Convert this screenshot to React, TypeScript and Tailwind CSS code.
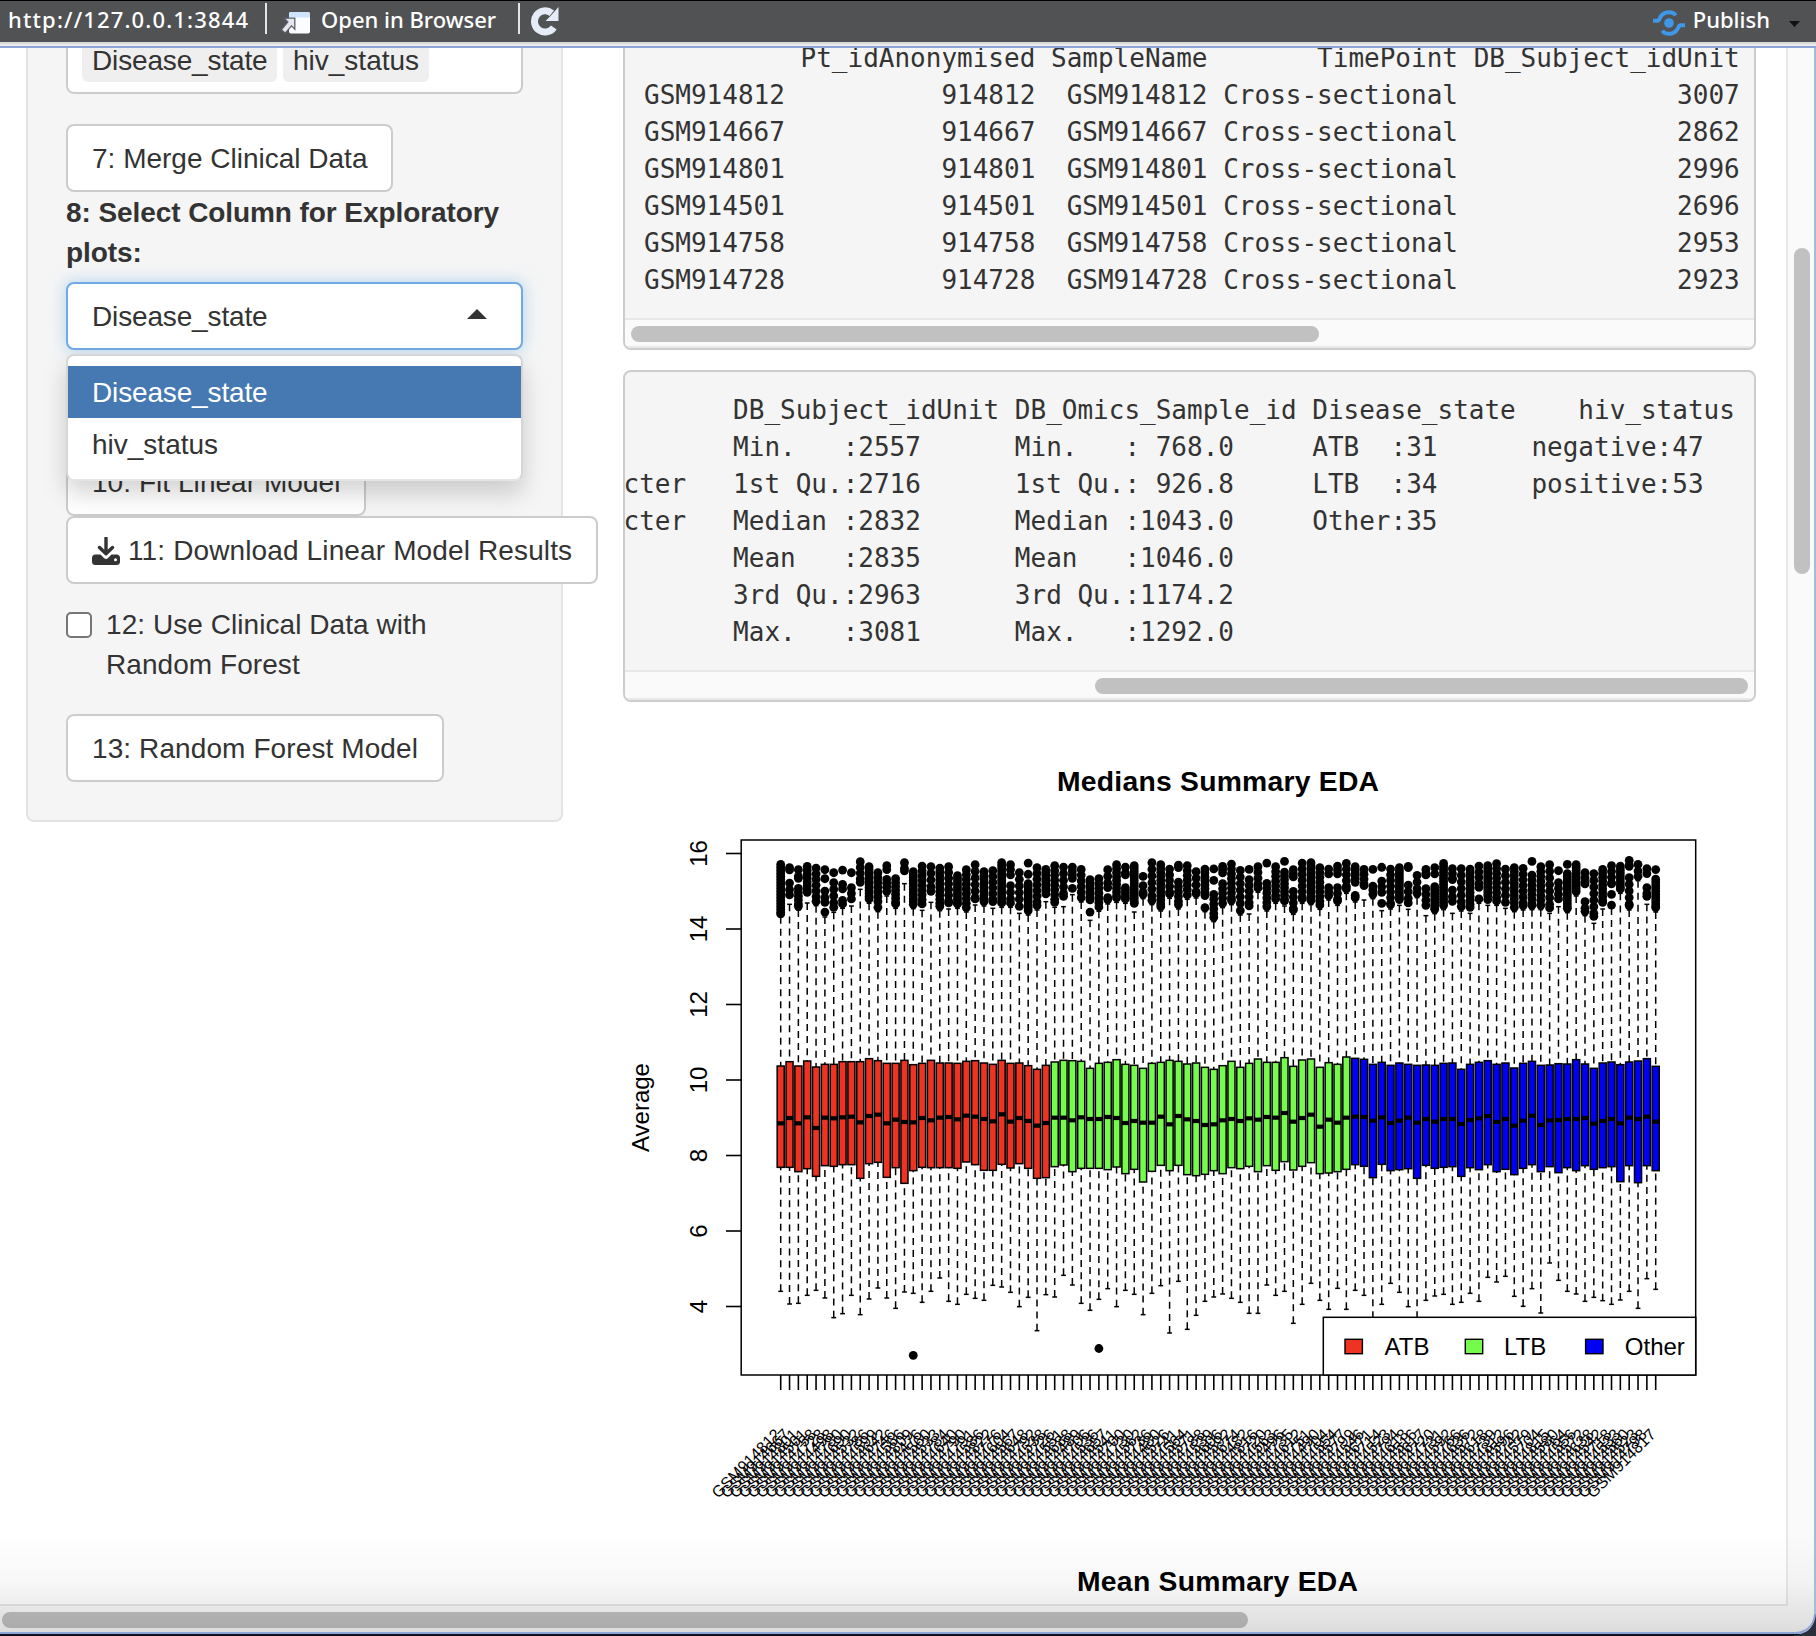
import React from "react";

const SANS = "font-['Liberation_Sans',Arial,sans-serif]";
const MONO = "font-['DejaVu_Sans_Mono',monospace]";
const BAR = "font-['Noto_Sans',sans-serif]";

/* ---------- chart data, in thirds of a pixel below y = 740 ---------- */

const TOPS = [
  978, 965, 978, 963, 981, 973, 973, 965, 965, 965, 956, 962, 970, 970, 961, 974, 970, 961, 969, 969, 970, 964, 962, 969, 973,
  961, 970, 969, 977, 988, 976, 966, 961, 962, 964, 985, 970, 967, 959, 973, 976, 985, 970, 967, 961, 964, 972, 969, 982, 988,
  977, 964, 982, 970, 957, 967, 967, 953, 979, 960, 957, 982, 968, 973, 951, 955, 958, 973, 967, 976, 969, 973, 976, 975, 976,
  970, 969, 988, 973, 967, 962, 973, 969, 984, 970, 964, 976, 975, 971, 972, 959, 972, 985, 969, 966, 974, 966, 963, 956, 979,
];

const MEDIANS = [
  1150, 1134, 1150, 1132, 1164, 1133, 1135, 1132, 1130, 1147, 1128, 1124, 1150, 1139, 1146, 1147, 1134, 1141, 1133, 1131, 1138,
  1127, 1130, 1137, 1144, 1123, 1145, 1134, 1143, 1157, 1149, 1133, 1133, 1141, 1132, 1137, 1137, 1131, 1134, 1149, 1143, 1148,
  1148, 1130, 1153, 1128, 1138, 1143, 1155, 1153, 1141, 1137, 1143, 1135, 1139, 1131, 1133, 1119, 1145, 1134, 1124, 1160, 1139,
  1148, 1133, 1130, 1131, 1142, 1132, 1149, 1142, 1133, 1148, 1137, 1145, 1137, 1137, 1152, 1140, 1135, 1128, 1146, 1137, 1157,
  1142, 1127, 1155, 1141, 1140, 1137, 1137, 1134, 1151, 1143, 1137, 1150, 1133, 1137, 1130, 1145,
];

const BOTTOMS = [
  1282, 1282, 1295, 1286, 1309, 1277, 1279, 1274, 1274, 1315, 1271, 1267, 1312, 1283, 1330, 1292, 1282, 1283, 1283, 1283, 1285,
  1266, 1274, 1291, 1291, 1273, 1284, 1271, 1285, 1315, 1313, 1280, 1275, 1295, 1285, 1285, 1285, 1289, 1281, 1301, 1288, 1326,
  1294, 1276, 1292, 1276, 1304, 1307, 1303, 1292, 1301, 1283, 1286, 1279, 1295, 1277, 1291, 1265, 1290, 1279, 1268, 1301, 1299,
  1295, 1288, 1274, 1279, 1313, 1273, 1292, 1289, 1286, 1315, 1276, 1285, 1282, 1280, 1309, 1283, 1289, 1274, 1295, 1288, 1304,
  1285, 1274, 1295, 1280, 1298, 1283, 1292, 1277, 1288, 1283, 1280, 1325, 1277, 1328, 1277, 1292,
];

/* Lower whisker ends, in thirds of a pixel below y = 1170. */
const LOWER = [
  364, 402, 400, 376, 361, 384, 443, 431, 376, 434, 387, 354, 384, 415, 366, 370, 397, 364, 324, 394, 403, 373, 385, 391, 346,
  351, 367, 410, 382, 482, 374, 381, 316, 345, 400, 421, 388, 356, 410, 361, 373, 434, 370, 347, 489, 334, 478, 436, 394, 381,
  372, 385, 397, 430, 430, 345, 376, 364, 460, 403, 340, 391, 418, 355, 418, 361, 376, 445, 403, 340, 367, 410, 445, 391, 378,
  373, 403, 397, 370, 394, 322, 336, 319, 379, 409, 356, 429, 279, 331, 364, 372, 394, 382, 392, 403, 390, 364, 415, 326, 358,
];

/* Runs of outliers per sample: "top-bottom,top-bottom|whisker end". */
const OUTLIERS = `360-535|530 370-403,416-478|493 376-428,432-512|510 366-470|489 371-497|497 376-402,403-425,440-500,503-528|531
385-410,415-515|517 377-402,420-460,468-505|505 385-408,430-490|498 352-440|448 367-490|490 385-515|515 364-402,405-467|468
403-505|505 355-406|431 382-506|506 365-505|511 367-467|487 371-512|512 367-502|507 394-505|505 376-516|516 361-490|495
382-498|498 379-498|505 355-502|502 361-418,424-502|502 385-512|520 356-381,388-416,418-525|525 370-510|510 375-475|485
364-500|502 368-482|500 368-428,432-458|464 375-486|486 406-493,503-528|541 403-514|514 376-456,460-492|492 361-487|487
368-418,430-490|490 364-503|516 396-422,424-476|476 355-494|494 361-513|513 374-475|475 362-396,413-507|507 364-478|478
382-474|474 374-480,490-515|515 373-400,408-434,450-545|545 366-412,418-503|503 359-494|494 378-525|525 375-397,406-511|522
367-457|457 356-381,417-513|513 367-490|490 351-376,383-496|498 376-424,441-523|523 356-490|490 355-494|494 370-508|508
374-415,430-480|480 365-415,430-496|496 357-460|460 367-440,453-486|486 375-450|480 375-397,425-476|476
368-395,410-470,477-503|512 374-507|507 370-492|496 366-396,422-502|508 393-473|473 375-418,433-509|527 370-415,427-521|521
357-509|509 373-432,437-497|520 373-513|513 374-515|520 365-455,462-490|490 364-492|496 358-496|496 374-500|505 370-515|515
372-510|510 351-375,392-509|509 367-509|509 361-517|520 379-403,415-490|500 360-384,388-518|518 361-468|468
385-445,472-527|527 388-542|550 375-500|507 364-445,450-473,482-504|504 365-460|460 348-392,400-510|510 360-422|422
373-414,430-482|493 374-402,404-516|516`
  .split(/\s+/)
  .map((entry) => {
    const [runs, whisker] = entry.split("|");
    return { runs: runs.split(",").map((r) => r.split("-").map(Number)), whisker: Number(whisker) };
  });

const SUFFIXES = [
  812, 667, 801, 501, 758, 728, 498, 780, 690, 532, 786, 599, 642, 746, 566, 809, 476, 560, 533, 784, 640, 790, 791, 586, 822,
  776, 604, 567, 648, 792, 538, 726, 551, 688, 489, 706, 536, 657, 541, 700, 730, 562, 736, 480, 526, 741, 564, 571, 788, 539,
  606, 592, 674, 482, 816, 720, 563, 496, 735, 612, 751, 490, 704, 554, 577, 799, 546, 671, 714, 523, 794, 618, 516, 617, 720,
  731, 592, 766, 636, 572, 618, 739, 812, 596, 742, 579, 704, 815, 580, 764, 556, 572, 638, 542, 718, 533, 560, 523, 798, 817,
];

const colX = (i: number) => 780.7 + i * 8.8384;
const third = (v: number) => 740 + v / 3;
const fillOf = (i: number) => (i < 31 ? "#ee3323" : i < 65 ? "#75fb4c" : "#0000f5");

function dotsIn(top: number, bottom: number, seed: number) {
  const from = third(top) + 4.4;
  const to = third(bottom) - 4.4;
  const ys: number[] = [];
  let y = from;
  let n = 0;
  while (y < to - 1) {
    ys.push(y);
    y += 3 + ((seed * 7 + n * 5) % 5) * 0.9;
    n += 1;
  }
  ys.push(Math.max(from, to));
  return ys;
}

function BoxPlot() {
  return (
    <svg className="block shrink-0" width="1132" height="902" viewBox="624 702 1132 902" fontFamily="'Liberation Sans', Arial, sans-serif">
      <text x="1057" y="790.8" fontSize="28.3" fontWeight="700" textLength="322" lengthAdjust="spacing">
        Medians Summary EDA
      </text>
      <g stroke="#000" strokeWidth="1.6">
        {[16, 14, 12, 10, 8, 6, 4].map((v, i) => (
          <line key={v} x1="726" x2="741" y1={853.5 + i * 75.5} y2={853.5 + i * 75.5} />
        ))}
        {TOPS.map((_, i) => (
          <line key={i} x1={colX(i)} x2={colX(i)} y1="1375" y2="1390" />
        ))}
      </g>
      {[16, 14, 12, 10, 8, 6, 4].map((v, i) => (
        <text key={v} fontSize="24" textAnchor="middle" transform={`translate(706.5 ${853.5 + i * 75.5}) rotate(-90)`}>
          {v}
        </text>
      ))}
      <text fontSize="24" textAnchor="middle" transform="translate(648.5 1107.5) rotate(-90)">
        Average
      </text>
      {TOPS.map((top, i) => {
        const x = colX(i);
        const { runs, whisker } = OUTLIERS[i];
        const upper = third(whisker);
        const lower = 1170 + LOWER[i] / 3;
        return (
          <g key={i}>
            <g stroke="#000" strokeWidth="1.5">
              <line x1={x} x2={x} y1={upper} y2={third(top)} strokeDasharray="7 5.1" />
              <line x1={x} x2={x} y1={lower} y2={third(BOTTOMS[i])} strokeDasharray="7 5.1" />
              <line x1={x - 2.4} x2={x + 2.4} y1={upper} y2={upper} />
              <line x1={x - 2.4} x2={x + 2.4} y1={lower} y2={lower} />
            </g>
            <rect
              x={x - 3.53}
              y={third(top)}
              width="7.07"
              height={(BOTTOMS[i] - top) / 3}
              fill={fillOf(i)}
              stroke="#000"
              strokeWidth="1.5"
            />
            <line x1={x - 3.53} x2={x + 3.53} y1={third(MEDIANS[i])} y2={third(MEDIANS[i])} stroke="#000" strokeWidth="4.2" />
            {runs.flatMap(([a, b], k) => dotsIn(a, b, i + k).map((y) => <circle key={`${k}-${y}`} cx={x} cy={y} r="4.4" />))}
          </g>
        );
      })}
      <circle cx={colX(15)} cy="1355.3" r="4.4" />
      <circle cx={colX(36)} cy="1348.5" r="4.4" />
      <rect x="741.2" y="840" width="954.5" height="535" fill="none" stroke="#000" strokeWidth="1.5" />
      <rect x="1323.3" y="1317.3" width="372.4" height="57.7" fill="#fff" stroke="#000" strokeWidth="1.5" />
      {[
        ["ATB", 1345, 1384.5, "#ee3323"],
        ["LTB", 1465.3, 1504, "#75fb4c"],
        ["Other", 1585.6, 1624.8, "#0000f5"],
      ].map(([name, sx, tx, color]) => (
        <g key={name}>
          <rect x={sx} y="1339.3" width="17.4" height="14.4" fill={color as string} stroke="#000" strokeWidth="1.4" />
          <text x={tx} y="1354.9" fontSize="24">
            {name}
          </text>
        </g>
      ))}
      {SUFFIXES.map((s, i) => (
        <text key={i} fontSize="16" textAnchor="end" transform={`translate(${colX(i) + 1} 1435.500) rotate(-45)`}>
          {`GSM914${s}`}
        </text>
      ))}
      <text x="1077" y="1590.8" fontSize="28.3" fontWeight="700" textLength="281" lengthAdjust="spacing">
        Mean Summary EDA
      </text>
    </svg>
  );
}

/* ---------- toolbar ---------- */

function OpenIcon() {
  return (
    <svg width="30" height="22" viewBox="0 0 30 22">
      <rect x="8" y="0" width="21" height="21.500" rx="2" fill="#fafcff" />
      <path d="M10 0h17a2 2 0 0 1 2 2v3.500H8V2a2 2 0 0 1 2-2z" fill="#cfe4fb" />
      <path d="M3.300 6.200h10.500v11l-3.300-3.300-6.300 7.300L.5 17.700l6.300-7.700z" fill="#e6e6ee" stroke="#5b5f6a" strokeWidth="1.300" />
    </svg>
  );
}

function ReloadIcon() {
  return (
    <svg width="30" height="30" viewBox="0 0 30 30">
      <path d="M23.800 21.500A10.600 10.600 0 1 1 21.800 7.200" fill="none" stroke="#e6ecf7" strokeWidth="7" />
      <path d="M28.500 1v14H15.500l5-5z" fill="#e6ecf7" />
    </svg>
  );
}

function PublishIcon() {
  return (
    <svg width="32" height="26" viewBox="0 0 32 26">
      <circle cx="16" cy="13" r="4.800" fill="#3f97e8" />
      <path d="M0 10.800h4.500C6 10.800 6.200 9.500 7 7.800 9.500 2.500 15.500.800 20.500 3.300c1.200.6 1.600 1.500 2 2.200" fill="none" stroke="#3f97e8" strokeWidth="4" />
      <path d="M32 15.200h-4.500c-1.500 0-1.700 1.300-2.500 3-2.500 5.300-8.500 7-13.500 4.500-1.200-.6-1.600-1.500-2-2.200" fill="none" stroke="#3f97e8" strokeWidth="4" />
    </svg>
  );
}

function Toolbar() {
  return (
    <header className={`flex h-[42px] shrink-0 items-center border-t border-black bg-[#515254] pb-[4px] text-[22px] font-medium text-white ${BAR}`}>
      <span className="ml-[8px] w-[242px] whitespace-nowrap tracking-[1.15px]">http://127.0.0.1:3844</span>
      <span className="-mt-[2px] ml-[15px] h-[31px] w-[2px] bg-[#e4e4e4]" />
      <span className="ml-[14px] mt-[7px]">
        <OpenIcon />
      </span>
      <span className="ml-[10px] w-[189px] whitespace-nowrap">Open in Browser</span>
      <span className="-mt-[2px] ml-[8px] h-[31px] w-[2px] bg-[#e4e4e4]" />
      <span className="ml-[10px] mt-[2px]">
        <ReloadIcon />
      </span>
      <span className="ml-auto mt-[6px]">
        <PublishIcon />
      </span>
      <span className="ml-[8px] whitespace-nowrap">Publish</span>
      <svg className="ml-[19px] mr-[16px] mt-[9px]" width="11" height="6" viewBox="0 0 11 6">
        <path d="M0 0h11L5.500 6z" fill="#111" />
      </svg>
    </header>
  );
}

/* ---------- sidebar ---------- */

function Button({ children, className = "" }: { children: React.ReactNode; className?: string }) {
  return (
    <button
      className={`flex h-[68px] w-max items-center whitespace-nowrap rounded-[8px] border-2 border-[#ccc] bg-white px-[24px] pt-[2px] leading-[40px] ${className}`}
    >
      {children}
    </button>
  );
}

function Sidebar() {
  return (
    <aside
      className={`ml-[26px] h-[774px] w-[537px] shrink-0 rounded-b-[8px] border-2 border-t-0 border-[#e3e3e3] bg-[#f5f5f5] px-[38px] text-[28px] leading-[40px] text-[#333] ${SANS}`}
    >
      <div className="flex h-[46px] w-[457px] items-end gap-[6px] overflow-hidden rounded-b-[8px] border-2 border-t-0 border-[#ccc] bg-white px-[14px] pb-[10px]">
        <span className="w-[195px] rounded-[6px] bg-[#efefef] px-[10px] pb-px tracking-[-0.15px]">Disease_state</span>
        <span className="w-[146px] rounded-[6px] bg-[#efefef] px-[10px] pb-px">hiv_status</span>
      </div>
      <Button className="mt-[30px]">7: Merge Clinical Data</Button>
      <label className="-mb-px block pt-px font-bold tracking-[-0.08px]">8: Select Column for Exploratory plots:</label>
      <div className="relative mt-[10px]">
        <div className="flex h-[68px] w-[457px] items-center justify-between rounded-[8px] border-2 border-[#70aae6] bg-white pl-[24px] pr-[34px] shadow-[0_0_16px_rgba(102,175,233,0.5)]">
          <span className="pt-[2px] tracking-[-0.15px]">Disease_state</span>
          <svg className="-mt-[4px]" width="20" height="10" viewBox="0 0 20 10">
            <path d="M10 0l10 10H0z" fill="#333" />
          </svg>
        </div>
        <ul className="absolute left-0 top-[72px] z-10 h-[127px] w-[457px] rounded-[8px] border-2 border-[#d6d6d6] border-b-[#e4e4e4] bg-white pt-[10px] shadow-[0_12px_24px_rgba(0,0,0,0.175)]">
          <li className="h-[52px] bg-[#4679b2] px-[24px] pt-[7px] tracking-[-0.15px] text-white">Disease_state</li>
          <li className="h-[52px] px-[24px] pt-[7px]">hiv_status</li>
        </ul>
      </div>
      <Button className="mt-[98px] tracking-[0.05px]">10: Fit Linear Model</Button>
      <Button className="gap-[8px] tracking-[0.13px]">
        <svg width="28" height="28" viewBox="0 0 28 28">
          <path d="M14 1v14M7.500 10.500L14 16.800l6.500-6.300" fill="none" stroke="#333" strokeWidth="3.400" strokeLinecap="round" strokeLinejoin="round" />
          <path
            d="M3.500 17.500h5L12 21a2.900 2.900 0 0 0 4 0l3.500-3.500h5A3.500 3.500 0 0 1 28 21v3.500a3.500 3.500 0 0 1-3.500 3.500h-21A3.500 3.500 0 0 1 0 24.500V21a3.500 3.500 0 0 1 3.500-3.500z"
            fill="#333"
          />
          <circle cx="23.500" cy="22.800" r="1.500" fill="#fff" />
        </svg>
        <span>11: Download Linear Model Results</span>
      </Button>
      <label className="mt-[21px] flex gap-[14px]">
        <span className="mt-[7px] h-[26px] w-[26px] shrink-0 rounded-[5px] border-2 border-[#767676] bg-white" />
        <span className="w-[340px] tracking-[0.06px]">12: Use Clinical Data with Random Forest</span>
      </label>
      <Button className="mt-[29px] tracking-[0.1px]">13: Random Forest Model</Button>
    </aside>
  );
}

/* ---------- printed tables ---------- */

const HEAD_ROWS = ["812|3007", "667|2862", "801|2996", "501|2696", "758|2953", "728|2923"].map((r) => {
  const [id, unit] = r.split("|");
  return `GSM914${id}          914${id}  GSM914${id} Cross-sectional${unit.padStart(18)}`;
});
const HEAD = ["          Pt_idAnonymised SampleName       TimePoint DB_Subject_idUnit", ...HEAD_ROWS].join("\n");

const SUMMARY = [
  "       DB_Subject_idUnit DB_Omics_Sample_id Disease_state    hiv_status",
  "       Min.   :2557      Min.   : 768.0     ATB  :31      negative:47",
  "cter   1st Qu.:2716      1st Qu.: 926.8     LTB  :34      positive:53",
  "cter   Median :2832      Median :1043.0     Other:35",
  "       Mean   :2835      Mean   :1046.0",
  "       3rd Qu.:2963      3rd Qu.:1174.2",
  "       Max.   :3081      Max.   :1292.0",
].join("\n");

function ScrollPane({ text, className, textClass, thumb }: { text: string; className: string; textClass: string; thumb: string }) {
  return (
    <div className={`-ml-px flex h-[332px] w-[1133px] shrink-0 flex-col overflow-hidden rounded-[8px] border-2 border-[#ccc] bg-[#f5f5f5] ${className}`}>
      <pre className={`h-[298px] shrink-0 pt-[19.600px] text-[26px] leading-[37.140px] text-[#333] ${textClass} ${MONO}`}>{text}</pre>
      <div className="flex h-[30px] shrink-0 items-center border-y-2 border-[#e8e8e8] bg-[#fafafa] pt-px">
        <span className={`h-[16px] rounded-full bg-[#c1c1c1] ${thumb}`} />
      </div>
    </div>
  );
}

export default function App() {
  return (
    <div className="relative flex h-[1636px] w-[1816px] flex-col overflow-hidden bg-white">
      <Toolbar />
      <div className="h-[2px] shrink-0 bg-[#d9dada]" />
      <div className="h-[2px] shrink-0 bg-[#ececec]" />
      <div className="h-[2px] shrink-0 bg-[#8fa4d6]" />
      <div className="flex h-[1584px] shrink-0 flex-col overflow-hidden border-r-2 border-[#a4b9dd]">
        <div className="flex h-[1556px] shrink-0 overflow-hidden">
          <Sidebar />
          <main className="ml-[61px] flex w-[1132px] shrink-0 flex-col">
            <ScrollPane text={HEAD} className="-mt-[30px]" textClass="pl-[19px]" thumb="ml-[6px] w-[688px]" />
            <ScrollPane text={SUMMARY} className="mt-[20px]" textClass="-ml-[1.500px]" thumb="ml-auto mr-[6px] w-[653px]" />
            <BoxPlot />
          </main>
          <div className="ml-auto w-[28px] shrink-0 border-l-2 border-[#e8e8e8] bg-[#fafafa] pl-[6px] pt-[200px]">
            <div className="h-[326px] w-[16px] rounded-full bg-[#c1c1c1]" />
          </div>
        </div>
        <div className="flex h-[28px] shrink-0 flex-col bg-[#fafafa]">
          <div className="mr-[26px] h-[2px] shrink-0 bg-[#e8e8e8]" />
          <div className="ml-[2px] mt-[6px] h-[16px] w-[1246px] shrink-0 rounded-full bg-[#c1c1c1]" />
        </div>
      </div>
      <div className="h-[2px] shrink-0 bg-[#8fa4d6]" />
      <div className="h-[2px] shrink-0 bg-[#0c1020]" />
      <div className="absolute bottom-[4px] left-0 right-[2px] h-[100px] bg-linear-to-b from-transparent via-black/3 to-black/12" />
      <svg className="absolute bottom-0 right-0" width="22" height="22" viewBox="0 0 22 22">
        <path d="M22 0v22H0v-1C12 21 21 13 21 0z" fill="#2b2f3a" />
        <path d="M0 19C12 19 20 12 21 0" fill="none" stroke="#8fa4d6" strokeWidth="2" />
      </svg>
    </div>
  );
}
